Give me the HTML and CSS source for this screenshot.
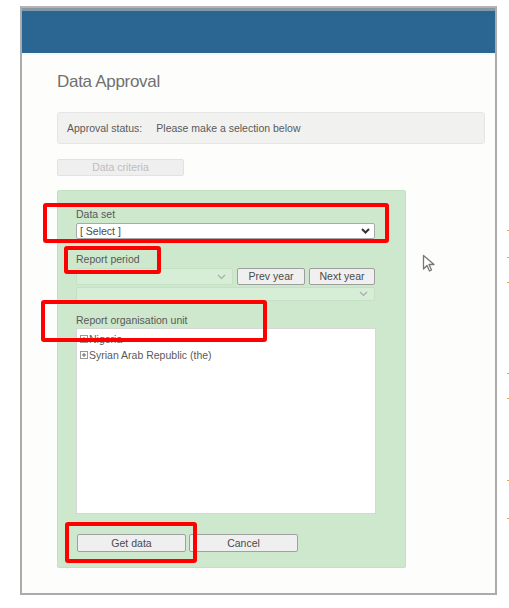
FILE: index.html
```html
<!DOCTYPE html>
<html>
<head>
<meta charset="utf-8">
<link rel="stylesheet" href="styles.css">
</head>
<body>
<div class="frame">
  <div class="header"></div>
  <div class="content">
    <h1 class="title">Data Approval</h1>
    <div class="status"><span class="status-label">Approval status:</span><span>Please make a selection below</span></div>
    <div class="criteria-btn">Data criteria</div>
    <div class="panel">
      <div class="label">Data set</div>
      <div class="select">
        <span>[ Select ]</span>
        <svg class="chev" width="9" height="6" viewBox="0 0 9 6"><polyline points="1,1 4.5,4.5 8,1" fill="none" stroke="#333" stroke-width="2"/></svg>
      </div>
      <div class="label label-gap">Report period</div>
      <div class="period-row">
        <div class="select disabled short">
          <svg class="chev" width="9" height="6" viewBox="0 0 9 6"><polyline points="1,1 4.5,4.5 8,1" fill="none" stroke="#aaa" stroke-width="1.2"/></svg>
        </div>
        <div class="btn small">Prev year</div>
        <div class="btn small next">Next year</div>
      </div>
      <div class="select disabled second">
        <svg class="chev" width="9" height="6" viewBox="0 0 9 6"><polyline points="1,1 4.5,4.5 8,1" fill="none" stroke="#aaa" stroke-width="1.2"/></svg>
      </div>
      <div class="label label-gap2">Report organisation unit</div>
      <div class="tree">
        <div class="node"><svg class="plus" width="8" height="8" viewBox="0 0 8 8"><rect x="0.5" y="0.5" width="7" height="7" fill="#fff" stroke="#999"/><path d="M2 4h4M4 2v4" stroke="#666"/></svg>Nigeria</div>
        <div class="node"><svg class="plus" width="8" height="8" viewBox="0 0 8 8"><rect x="0.5" y="0.5" width="7" height="7" fill="#fff" stroke="#999"/><path d="M2 4h4M4 2v4" stroke="#666"/></svg>Syrian Arab Republic (the)</div>
      </div>
      <div class="actions">
        <div class="btn action">Get data</div>
        <div class="btn action">Cancel</div>
      </div>
    </div>
  </div>
</div>

<div class="mark m1"></div>
<div class="mark m2"></div>
<div class="mark m3"></div>
<div class="mark m4"></div>

<svg class="cursor" width="14" height="19" viewBox="0 0 14 19"><path d="M1.5 1.5 L1.5 15 L5 11.5 L7.5 17 L9.5 16 L7 10.5 L12 10.5 Z" fill="#fff" stroke="#777" stroke-width="1.3" stroke-linejoin="round"/></svg>

<div class="dot" style="top:230px"></div>
<div class="dot" style="top:257px"></div>
<div class="dot" style="top:282px"></div>
<div class="dot" style="top:373px"></div>
<div class="dot" style="top:398px"></div>
<div class="dot" style="top:480px"></div>
<div class="dot" style="top:518px"></div>
</body>
</html>
```
FILE: styles.css
```css
html, body {
  margin: 0;
  padding: 0;
  background: #ffffff;
}
body {
  font-family: "Liberation Sans", Arial, sans-serif;
  position: relative;
  width: 509px;
  height: 608px;
  overflow: hidden;
  padding-top: 6px;
  padding-left: 20px;
  box-sizing: border-box;
}
.frame {
  width: 477px;
  height: 589px;
  box-sizing: border-box;
  border: 2px solid #ababab;
  border-top-color: #b4b4b4;
  background: #fdfdfb;
}
.header {
  height: 42px;
  background: #2b6591;
  border-top: 3px solid #8598a8;
  border-bottom: 2px solid #f0f8fc;
}
.content {
  padding-left: 35px;
}
.title {
  margin: 17px 0 0 0;
  font-weight: normal;
  font-size: 17px;
  line-height: 20px;
  color: #707070;
  letter-spacing: -0.3px;
}
.status {
  margin-top: 20px;
  width: 428px;
  height: 32px;
  box-sizing: border-box;
  background: #f1f1f0;
  border: 1px solid #e6e6e6;
  border-radius: 3px;
  display: flex;
  align-items: center;
  padding-left: 9px;
  font-size: 10.5px;
  color: #5a5a5a;
}
.status-label {
  margin-right: 14px;
}
.criteria-btn {
  margin-top: 15px;
  width: 127px;
  height: 17px;
  box-sizing: border-box;
  background: #efefef;
  border: 1px solid #e2e2e2;
  border-radius: 2px;
  font-size: 10.5px;
  color: #bdbdbd;
  text-align: center;
  line-height: 15px;
}
.panel {
  margin-top: 14px;
  width: 349px;
  height: 378px;
  box-sizing: border-box;
  background: #cde8cd;
  border: 1px solid #c4e0c4;
  border-radius: 2px;
  padding: 16px 0 0 18px;
  display: flex;
  flex-direction: column;
}
.label {
  font-size: 10.5px;
  line-height: 14px;
  height: 14px;
  color: #585858;
}
.select {
  margin-top: 2px;
  width: 299px;
  height: 16px;
  box-sizing: border-box;
  background: #fff;
  border: 1px solid #a9a9a9;
  border-radius: 2px;
  display: flex;
  align-items: center;
  justify-content: space-between;
  padding: 0 4px 0 3px;
  font-size: 10.5px;
  color: #4a4a4a;
}
.select.disabled {
  background: #d6eed6;
  border-color: #c6e0c6;
  justify-content: flex-end;
  padding-right: 6px;
}
.label-gap {
  margin-top: 13px;
}
.period-row {
  margin-top: 2px;
  display: flex;
  gap: 4px;
  height: 17px;
}
.select.short {
  margin-top: 0;
  width: 157px;
  height: 17px;
}
.select.second {
  width: 299px;
  height: 14px;
  margin-top: 2px;
}
.btn {
  box-sizing: border-box;
  background: #f0f0f0;
  border: 1px solid #9e9e9e;
  border-radius: 2px;
  font-size: 10.5px;
  color: #4a4a4a;
  text-align: center;
}
.btn.small {
  width: 68px;
  height: 17px;
  line-height: 15px;
}
.btn.next {
  width: 66px;
}
.label-gap2 {
  margin-top: 12px;
}
.tree {
  margin-top: 1px;
  width: 300px;
  height: 186px;
  box-sizing: border-box;
  background: #fff;
  border: 1px solid #d6d6d6;
  padding: 2px 0 0 3px;
}
.node {
  display: flex;
  align-items: center;
  font-size: 10.5px;
  line-height: 16px;
  color: #5a5a5a;
}
.plus {
  margin-right: 1px;
}
.actions {
  margin-top: 20px;
  display: flex;
  gap: 3px;
  padding-left: 1px;
}
.btn.action {
  width: 109px;
  height: 18px;
  line-height: 16px;
  background: #efefef;
  border-color: #a0a0a0;
}
.mark {
  position: absolute;
  border: 4px solid #fe0000;
  border-radius: 3px;
  box-sizing: border-box;
}
.m1 { left: 43px; top: 203px; width: 346px; height: 40px; }
.m2 { left: 64px; top: 246px; width: 97px; height: 28px; }
.m3 { left: 41px; top: 300px; width: 226px; height: 42px; }
.m4 { left: 65px; top: 522px; width: 132px; height: 41px; }
.cursor {
  position: absolute;
  left: 422px;
  top: 254px;
}
.dot {
  position: absolute;
  left: 507px;
  width: 2px;
  height: 1px;
  background: #f0a040;
}
```
